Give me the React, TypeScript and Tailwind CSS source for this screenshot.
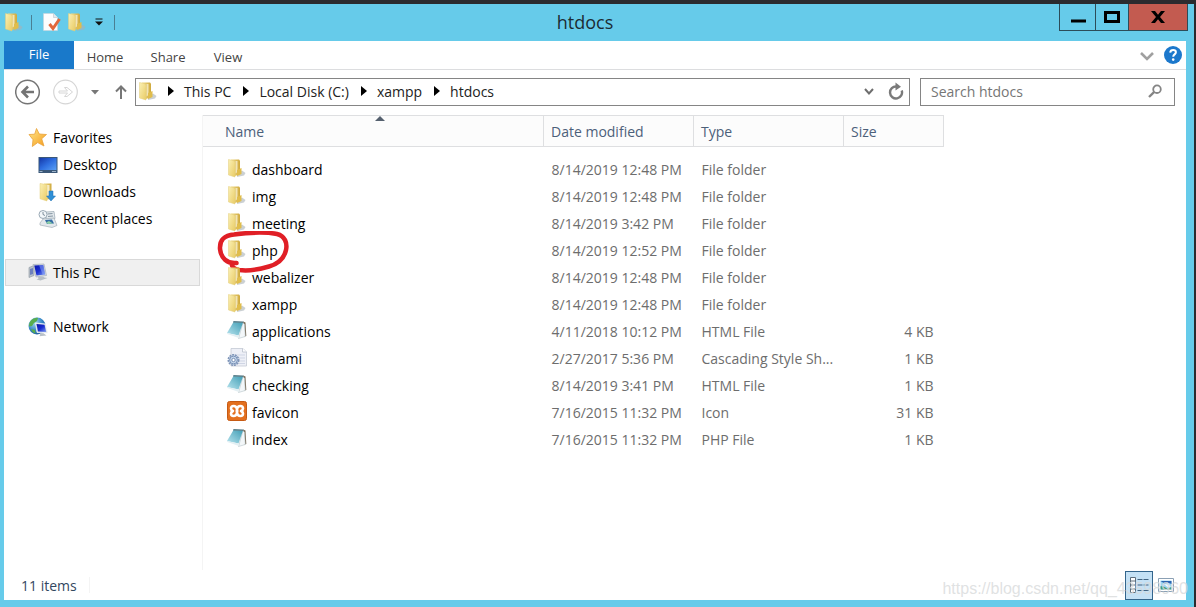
import { useState } from "react";

type FileKind = "folder" | "notepad" | "css" | "xampp";

interface FileRow {
  name: string;
  modified: string;
  type: string;
  size?: string;
  kind: FileKind;
}

const files: FileRow[] = [
  { name: "dashboard", modified: "8/14/2019 12:48 PM", type: "File folder", kind: "folder" },
  { name: "img", modified: "8/14/2019 12:48 PM", type: "File folder", kind: "folder" },
  { name: "meeting", modified: "8/14/2019 3:42 PM", type: "File folder", kind: "folder" },
  { name: "php", modified: "8/14/2019 12:52 PM", type: "File folder", kind: "folder" },
  { name: "webalizer", modified: "8/14/2019 12:48 PM", type: "File folder", kind: "folder" },
  { name: "xampp", modified: "8/14/2019 12:48 PM", type: "File folder", kind: "folder" },
  { name: "applications", modified: "4/11/2018 10:12 PM", type: "HTML File", size: "4 KB", kind: "notepad" },
  { name: "bitnami", modified: "2/27/2017 5:36 PM", type: "Cascading Style Sh...", size: "1 KB", kind: "css" },
  { name: "checking", modified: "8/14/2019 3:41 PM", type: "HTML File", size: "1 KB", kind: "notepad" },
  { name: "favicon", modified: "7/16/2015 11:32 PM", type: "Icon", size: "31 KB", kind: "xampp" },
  { name: "index", modified: "7/16/2015 11:32 PM", type: "PHP File", size: "1 KB", kind: "notepad" },
];

const crumbs = ["This PC", "Local Disk (C:)", "xampp", "htdocs"];

function Gradients() {
  return (
    <svg className="absolute size-0" aria-hidden="true">
      <defs>
        <linearGradient id="folder" x1="0" x2="1" y1="0" y2="1">
          <stop offset="0" stopColor="#fbf0b4" />
          <stop offset="1" stopColor="#e9cc66" />
        </linearGradient>
        <linearGradient id="folderBack" x1="0" x2="1">
          <stop offset="0" stopColor="#f3df90" />
          <stop offset="1" stopColor="#cfa93c" />
        </linearGradient>
        <linearGradient id="screen" x1="0" x2="1" y1="0" y2="1">
          <stop offset="0" stopColor="#1437a8" />
          <stop offset="0.5" stopColor="#2f6fe0" />
          <stop offset="1" stopColor="#5ba1f5" />
        </linearGradient>
        <linearGradient id="monitor" x1="0" x2="1" y1="0" y2="1">
          <stop offset="0" stopColor="#0a14a8" />
          <stop offset="0.5" stopColor="#1a2ed0" />
          <stop offset="1" stopColor="#7d9cf5" />
        </linearGradient>
        <linearGradient id="star" x1="0" x2="1" y1="0" y2="1">
          <stop offset="0" stopColor="#ffe98a" />
          <stop offset="1" stopColor="#f59a1c" />
        </linearGradient>
        <linearGradient id="page" x1="1" x2="0" y1="0" y2="1">
          <stop offset="0" stopColor="#3f9db5" />
          <stop offset="1" stopColor="#b9e4ee" />
        </linearGradient>
        <radialGradient id="globe" cx="0.35" cy="0.3" r="0.8">
          <stop offset="0" stopColor="#a6dcf4" />
          <stop offset="0.6" stopColor="#3283c4" />
          <stop offset="1" stopColor="#174f8c" />
        </radialGradient>
      </defs>
    </svg>
  );
}

function FolderIcon() {
  return (
    <svg viewBox="0 0 20 20" className="size-5 shrink-0" aria-hidden="true">
      <path d="M10 16l5-3.500 3.500 2.500-1.500 2.500-7 1.500z" fill="#a9b0b6" opacity="0.6" />
      <path d="M4 1.500h8l1 1v13.500l-5 2z" fill="url(#folderBack)" />
      <path d="M8.500 3h2v11l-2 1.500z" fill="#fffdf0" opacity="0.6" />
      <path d="M1.500 1.500l4.500 1 2 1v15.500l-6.500-2z" fill="url(#folder)" stroke="#e3cc7a" strokeWidth="0.500" />
      <path d="M10 12l4.500-2v6l-4.500 2z" fill="#e0bd4c" />
    </svg>
  );
}

function NotepadIcon() {
  return (
    <svg viewBox="0 0 20 20" className="size-5 shrink-0" aria-hidden="true">
      <path d="M16 1.500l2.500 1 .8 13.500-3.500 1z" fill="#7a6b55" />
      <path d="M16 2.500l1.500 2 .8 12-6.800 2z" fill="#f3f7f9" stroke="#a9b8bf" strokeWidth="0.500" />
      <path d="M6.500 2L16 2.500 11.500 15.500 0 13z" fill="url(#page)" />
      <path d="M0 13l11.500 2.500.3 2.500L.3 14z" fill="#e3eff3" />
      <path d="M6.500 1l10 .5-.5 1.500-10-.5z" fill="#597f8b" />
    </svg>
  );
}

function CssIcon() {
  return (
    <svg viewBox="0 0 20 20" className="size-5 shrink-0" aria-hidden="true">
      <path d="M4 1.500h12l3.500 3.500v14H4z" fill="#eef0f7" stroke="#c4c9d4" strokeWidth="0.800" />
      <path d="M15.500 1.500V5h4" fill="#fff" stroke="#b9bfcb" strokeWidth="0.800" />
      <path d="M6 8h12M6 11h12M6 14h12M6 16.500h12" stroke="#cfd5e4" strokeWidth="1" />
      <circle cx="6.500" cy="13" r="5.200" fill="#dfe9f5" stroke="#7f95b8" strokeWidth="1.600" strokeDasharray="2 .8" />
      <circle cx="6.500" cy="13" r="3.900" fill="#c7d8ec" stroke="#6f88b0" strokeWidth="0.900" />
      <circle cx="6.500" cy="13" r="1.700" fill="#fff" stroke="#5f7aa5" strokeWidth="0.800" />
    </svg>
  );
}

function XamppIcon() {
  return (
    <svg viewBox="0 0 20 20" className="size-5 shrink-0" aria-hidden="true">
      <rect x="0.500" y="0.500" width="19" height="19" rx="2" fill="#e3701f" stroke="#c65a14" />
      <path
        d="M10 8C9.500 5.500 8 5 6.500 5S4 6 4 7.500s1 2 2 2.500c-1 .5-2 1-2 2.500S5 15 6.500 15s3-.5 3.500-3c.5 2.500 2 3 3.500 3s2.500-1 2.500-2.500-1-2-2-2.500c1-.5 2-1 2-2.500S15 5 13.500 5 10.500 5.500 10 8z"
        fill="none"
        stroke="#fff"
        strokeWidth="2.600"
        strokeLinejoin="round"
      />
      <path d="M8.500 10h3" stroke="#fff" strokeWidth="3" />
    </svg>
  );
}

const fileIcons: Record<FileKind, () => React.JSX.Element> = {
  folder: FolderIcon,
  notepad: NotepadIcon,
  css: CssIcon,
  xampp: XamppIcon,
};

function StarIcon() {
  return (
    <svg viewBox="0 0 20 20" className="size-5 shrink-0" aria-hidden="true">
      <path
        d="M8.500 .5l2.800 5.500 7.200.5-4.800 4.300 2.300 7.200-6.300-3.400L4.300 18.500l.7-6.800L1 6.500l5.700-.3z"
        fill="url(#star)"
        stroke="#e8a23a"
        strokeWidth="0.800"
        strokeLinejoin="round"
      />
    </svg>
  );
}

function DesktopIcon() {
  return (
    <svg viewBox="0 0 20 20" className="size-5 shrink-0" aria-hidden="true">
      <rect x="0.500" y="2" width="19" height="16" fill="#3b5878" />
      <rect x="1.500" y="3" width="17" height="12" fill="url(#screen)" />
      <path d="M1.500 16.500h3M14 16.500h4" stroke="#9cb2c8" />
    </svg>
  );
}

function DownloadsIcon() {
  return (
    <svg viewBox="0 0 20 20" className="size-5 shrink-0" aria-hidden="true">
      <path d="M6 1.500h7.500v15L8 18z" fill="url(#folderBack)" />
      <path d="M8 3h3.500v11L8 16z" fill="#fffdf0" opacity="0.7" />
      <path d="M2 1.500l5 .8 2 1.200v15.500l-7-2.200z" fill="url(#folder)" stroke="#e3cc7a" strokeWidth="0.500" />
      <path d="M11 9h4v5h2.500L13 19l-4.500-5H11z" fill="#2f8fd6" stroke="#1f6fb0" strokeWidth="0.500" />
    </svg>
  );
}

function RecentIcon() {
  return (
    <svg viewBox="0 0 20 20" className="size-5 shrink-0" aria-hidden="true">
      <path d="M8 3l8-.5 1 7-9 1.500z" fill="#e2e8ec" stroke="#98a6b0" strokeWidth="0.700" />
      <path d="M9.500 5l5-.5M10 7.500l5-.5" stroke="#8596a3" />
      <circle cx="5" cy="5.500" r="4" fill="#f3f7fa" stroke="#9aa9b5" />
      <path d="M5 3v2.500l2 1" fill="none" stroke="#5d7180" strokeWidth="0.800" />
      <path d="M2 14l3-4 11-1 3 7.500-5 2-12-2.500z" fill="#e3e8ec" stroke="#97a5af" strokeWidth="0.600" />
      <path d="M7 11l7-.5 2 4-7 .5z" fill="#346da5" />
      <path d="M8 13.500l3-1.500 4 2.500-5 .5z" fill="#8fd0a8" />
    </svg>
  );
}

function PcIcon() {
  return (
    <svg viewBox="0 0 20 20" className="size-5 shrink-0" aria-hidden="true">
      <path d="M1 4.500l5-2v10l-5 2z" fill="#b9c1c9" stroke="#8b969f" strokeWidth="0.600" />
      <path d="M2 6l3-1v6l-3 1z" fill="#6d80bd" />
      <path d="M5 1.500l11-.5 2.500 11.500L8 14z" fill="#d7dde4" stroke="#9aa5b0" strokeWidth="0.600" />
      <path d="M6.200 2.500l9-.5 2 9.500-8.700 1z" fill="url(#monitor)" />
      <path d="M11 2.300l4.200-.3 2 9.500-2.500.2z" fill="#93aefa" opacity="0.5" />
      <path d="M10 14l5-.5 1.500 1 3 .5-7 2.500-4-1 2-1z" fill="#b6bec6" />
    </svg>
  );
}

function NetworkIcon() {
  return (
    <svg viewBox="0 0 20 20" className="size-5 shrink-0" aria-hidden="true">
      <circle cx="9" cy="9" r="8.500" fill="url(#globe)" />
      <path d="M3 3.500c2-2 5-3 7-2.500l-1 3-3 2-2 3-3 .5C1 7 1.500 5 3 3.500zM3 12l4 1 .5 3.500C5 16 3.500 14 3 12z" fill="#58ad4e" />
      <path d="M7.500 6l10 1 2 9-10.500-.5z" fill="#d7dde4" stroke="#f3f6f8" strokeWidth="0.800" />
      <path d="M8.500 7l8 .8 1.700 7.200-8.200-.5z" fill="url(#monitor)" />
      <path d="M12.500 16l3 .2 3 2.300-7 .8z" fill="#b9c1c9" />
    </svg>
  );
}

const favorites = [
  { label: "Desktop", Icon: DesktopIcon },
  { label: "Downloads", Icon: DownloadsIcon },
  { label: "Recent places", Icon: RecentIcon },
];

function TitleBar() {
  return (
    <header className="flex h-[37px] shrink-0 items-start">
      <div className="flex h-9 items-center">
        <FolderIcon />
        <span className="ml-[7px] h-[15px] w-px bg-[#4a7f93]" />
        <button type="button" aria-label="Properties" className="ml-2.5">
          <svg viewBox="0 0 20 20" className="size-5">
            <path d="M1.500 1.500h10l4 4v13h-14z" fill="#fdfdfd" stroke="#c7d3da" strokeWidth="0.600" />
            <path d="M11.500 1.500v4h4" fill="#e3e9ed" stroke="#b8c5cd" strokeWidth="0.600" />
            <path d="M7.500 12l3.500 4.500L17.500 7" fill="none" stroke="#e2683c" strokeWidth="3" />
          </svg>
        </button>
        <button type="button" aria-label="New folder" className="ml-[5px]">
          <FolderIcon />
        </button>
        <button type="button" aria-label="Customize Quick Access Toolbar" className="ml-2">
          <svg viewBox="0 0 8 8" className="size-2">
            <path d="M.5 1h7" stroke="#111" strokeWidth="1" />
            <path d="M0 3.500h8L4 7.500z" fill="#111" />
          </svg>
        </button>
        <span className="ml-[11px] h-[15px] w-px bg-[#4a7f93]" />
      </div>
      <h1 className="flex h-9 flex-1 items-center justify-center pr-1 text-[18px] text-[#1c2b33]">htdocs</h1>
      <div className="flex h-[27px] border-b border-l border-[#2c4c59]">
        <button type="button" aria-label="Minimize" className="flex w-9 items-center justify-center border-r border-[#2c4c59]">
          <svg viewBox="0 0 16 12" className="h-3 w-4">
            <path d="M1 8.500h15v3H1z" />
          </svg>
        </button>
        <button type="button" aria-label="Maximize" className="flex w-[33px] items-center justify-center border-r border-[#2c4c59]">
          <svg viewBox="0 0 16 12" className="h-3 w-4">
            <path d="M1.500 1.500h13v9h-13z" fill="none" stroke="#000" strokeWidth="3" />
          </svg>
        </button>
        <button type="button" aria-label="Close" className="flex w-[59px] items-center justify-center border-r border-[#2c4c59] bg-[#c35b50]">
          <svg viewBox="0 0 14 12" className="h-3 w-3.5">
            <path d="M0 0h4l3 3.700L10 0h4L9 6l5 6h-4L7 8.300 4 12H0l5-6z" />
          </svg>
        </button>
      </div>
    </header>
  );
}

function RibbonTabs() {
  return (
    <nav className="flex h-[29px] shrink-0 items-stretch border-b border-[#dcdddf] text-[13px] text-[#444]">
      <button type="button" className="w-[70px] bg-[#1979ca] text-white">
        File
      </button>
      <button type="button" className="w-[62px] pt-1.5">Home</button>
      <button type="button" className="w-16 pt-1.5">Share</button>
      <button type="button" className="w-14 pt-1.5">View</button>
      <button type="button" aria-label="Expand the Ribbon" className="ml-auto pt-0.5">
        <svg viewBox="0 0 14 10" className="h-2.5 w-3.5">
          <path d="M1 2l6 6 6-6" fill="none" stroke="#a0a0a0" strokeWidth="2.600" />
        </svg>
      </button>
      <button type="button" aria-label="Help" className="mr-1 ml-2.5">
        <svg viewBox="0 0 18 18" className="size-[18px]">
          <circle cx="9" cy="9" r="9" fill="#1c78cc" />
          <path d="M6.200 6.600C6.400 4.800 7.600 4 9.100 4c1.700 0 2.800.9 2.800 2.300 0 2-2.700 2.200-2.700 4.400" fill="none" stroke="#fff" strokeWidth="2" />
          <circle cx="9.200" cy="13.600" r="1.300" fill="#fff" />
        </svg>
      </button>
    </nav>
  );
}

function AddressBar() {
  const [query, setQuery] = useState("");

  return (
    <div className="flex h-[45px] shrink-0 items-start pt-2 pr-[11px] pl-[11px]">
      <div className="flex h-7 items-center">
        <button type="button" aria-label="Back">
          <svg viewBox="0 0 26 26" className="size-[26px]" fill="none" stroke="#747474">
            <circle cx="12.500" cy="13" r="11.800" strokeWidth="1.500" />
            <path d="M19 13H7.500M13 7.500L7.500 13l5.500 5.500" strokeWidth="2.600" />
          </svg>
        </button>
        <button type="button" aria-label="Forward" className="ml-3">
          <svg viewBox="0 0 26 26" className="size-[26px]" fill="none" stroke="#d6d6d6">
            <circle cx="12.500" cy="13" r="11.800" strokeWidth="1.200" />
            <path d="M6 12h8.500l-3-3.500h2.500l5.500 4.500-5.500 4.500h-2.500l3-3.500H6z" />
          </svg>
        </button>
        <button type="button" aria-label="Recent locations" className="ml-3">
          <svg viewBox="0 0 8 5" className="h-[5px] w-2">
            <path d="M0 0h8L4 4.500z" fill="#777" />
          </svg>
        </button>
        <button type="button" aria-label="Up" className="ml-4">
          <svg viewBox="0 0 12 14" className="h-3.5 w-3" fill="none" stroke="#777" strokeWidth="2">
            <path d="M6 14V2M1 6.500l5-5 5 5" />
          </svg>
        </button>
      </div>
      <div className="ml-2 flex h-7 flex-1 items-center border border-[#858585] pb-0.5 pl-0.5">
        <FolderIcon />
        {crumbs.map((crumb) => (
          <div key={crumb} className="flex items-center">
            <svg viewBox="0 0 6 10" className="ml-2.5 h-2.5 w-1.5" aria-hidden="true">
              <path d="M0 0l6 5-6 5z" />
            </svg>
            <a href="#" className="mr-0.5 ml-2.5 text-[14px] text-[#222]">
              {crumb}
            </a>
          </div>
        ))}
        <button type="button" aria-label="Previous locations" className="ml-auto">
          <svg viewBox="0 0 10 8" className="h-2 w-2.5">
            <path d="M1 2l4 4.500L9 2" fill="none" stroke="#6e6e6e" strokeWidth="2" />
          </svg>
        </button>
        <button type="button" aria-label="Refresh" className="mr-[5px] ml-3.5">
          <svg viewBox="0 0 16 18" className="h-[18px] w-4">
            <path d="M13.700 8.500a6 6 0 1 1-5.200-4" fill="none" stroke="#7a7a7a" strokeWidth="2.400" />
            <path d="M7.500 .5l5.500 4.300-5.500 3.700z" fill="#7a7a7a" />
          </svg>
        </button>
      </div>
      <label className="ml-2.5 flex h-7 w-[255px] items-center border border-[#858585] pr-3 pb-0.5 pl-2.5">
        <input
          type="text"
          aria-label="Search htdocs"
          placeholder="Search htdocs"
          value={query}
          onChange={(e) => setQuery(e.target.value)}
          className="min-w-0 flex-1 text-[14px] text-[#222] outline-none placeholder:text-[#767676]"
        />
        <svg viewBox="0 0 14 14" className="size-3.5" fill="none" stroke="#858585" aria-hidden="true">
          <circle cx="9" cy="5.200" r="3.800" strokeWidth="1.800" />
          <path d="M6 8.200L1 13" strokeWidth="2.400" />
        </svg>
      </label>
    </div>
  );
}

function Sidebar() {
  return (
    <aside className="w-[199px] shrink-0 border-r border-[#f4f4f4] pt-[9px] text-[14px] text-black">
      <ul>
        <li className="flex h-[27px] items-center pl-6">
          <StarIcon />
          <a href="#" className="ml-[5px]">Favorites</a>
        </li>
        {favorites.map(({ label, Icon }) => (
          <li key={label} className="flex h-[27px] items-center pl-[34px]">
            <Icon />
            <a href="#" className="ml-[5px]">{label}</a>
          </li>
        ))}
      </ul>
      <div className="mt-[27px] mr-0.5 ml-px flex h-[27px] items-center border border-[#d9d9d9] bg-[#f0f0f0] pl-[22px]">
        <PcIcon />
        <a href="#" className="ml-[5px]">This PC</a>
      </div>
      <div className="mt-[27px] flex h-[27px] items-center pl-6">
        <NetworkIcon />
        <a href="#" className="ml-[5px]">Network</a>
      </div>
    </aside>
  );
}

function FileList() {
  return (
    <main className="flex-1">
      <table className="w-[741px] table-fixed text-left text-[14px] text-[#6d6d6d]">
        <colgroup>
          <col />
          <col className="w-[150px]" />
          <col className="w-[150px]" />
          <col className="w-[100px]" />
        </colgroup>
        <thead className="bg-[#fcfcfc] text-[#4c607a]">
          <tr className="h-[31px] border-y border-[#dedfe1]">
            <th className="relative border-r border-[#dedfe1] pl-[22px] font-normal">
              Name
              <span className="absolute top-0 right-0 left-3.5 flex justify-center">
                <svg viewBox="0 0 10 5" className="h-[5px] w-2.5" aria-hidden="true">
                  <path d="M0 5l5-5 5 5z" fill="#55606e" />
                </svg>
              </span>
            </th>
            <th className="border-r border-[#dedfe1] pl-[7px] font-normal">Date modified</th>
            <th className="border-r border-[#dedfe1] pl-[7px] font-normal">Type</th>
            <th className="border-r border-[#dedfe1] pl-[7px] font-normal">Size</th>
          </tr>
        </thead>
        <tbody className="before:block before:h-[9px] before:content-['']">
          {files.map((file) => {
            const Icon = fileIcons[file.kind];
            return (
              <tr key={file.name} className="h-[27px]">
                <td className="relative pl-6">
                  <div className="flex items-center text-black [&>svg]:mb-1">
                    <Icon />
                    <span className="ml-[5px]">{file.name}</span>
                  </div>
                  {file.name === "php" && (
                    <svg viewBox="0 0 72 42" className="absolute -top-1.5 left-3.5 h-[42px] w-[72px]" aria-hidden="true">
                      <path
                        d="M19.500 32C10 33 4 27 3 18 2.500 9 7 4.500 17 3.500c15-2 32-2.500 43-.5 8 2 10.500 9 9 16-2 9-8 14-17 16.500-10 3-22 4.500-30 3.500-5-1-7-3-7.500-6"
                        fill="none"
                        stroke="#e01f26"
                        strokeWidth="4.500"
                        strokeLinecap="round"
                        strokeLinejoin="round"
                      />
                    </svg>
                  )}
                </td>
                <td className="pl-2 whitespace-nowrap">{file.modified}</td>
                <td className="pl-2 whitespace-nowrap">{file.type}</td>
                <td className="pr-2.5 text-right">{file.size}</td>
              </tr>
            );
          })}
        </tbody>
      </table>
    </main>
  );
}

function StatusBar() {
  return (
    <footer className="flex h-[30px] shrink-0 items-center pr-3 pl-[17px] text-[14px] text-[#33475f]">
      <span>11 items</span>
      <span className="ml-3 h-4 w-px bg-[#f4f4f4]" />
      <button
        type="button"
        aria-label="Details view"
        className="ml-auto flex h-[29px] w-7 items-center justify-center border border-[#33658c] bg-[#c4e1f5]"
      >
        <svg viewBox="0 0 20 16" className="h-4 w-5">
          <path d="M1.500.5h5v15h-5z" fill="#fff" stroke="#5e6e7c" />
          <path d="M2 4h4M2 8h4M2 12h4" stroke="#5e6e7c" strokeWidth="1.200" />
          <path d="M8.500 2.500h5M14.500 2.500h5M8.500 8h5M14.500 8h5M8.500 13.500h5M14.500 13.500h5" stroke="#426583" />
        </svg>
      </button>
      <button type="button" aria-label="Large icons view" className="ml-[5px]">
        <svg viewBox="0 0 16 14" className="h-3.5 w-4">
          <path d="M.5.5h15v13H.5z" fill="#fff" stroke="#8ba0b4" />
          <path d="M2.500 2.500h11v9h-11z" fill="#9fd6f5" />
          <path d="M2.500 3l4 2.500 3-1 4 1.500V3z" fill="#2a63b0" />
          <path d="M2.500 8l3 .5 4 2 4-1.500v2.500h-11z" fill="#3d9a7b" />
          <path d="M6 6l4 .5 3 2-3.500.5z" fill="#f1f8fc" />
        </svg>
      </button>
    </footer>
  );
}

export default function App() {
  return (
    <div className="relative flex min-h-screen flex-col border-t-4 border-r-2 border-[#2b2b2f] bg-[#66cbea] pl-1 font-['Open_Sans','Noto_Sans',sans-serif]">
      <Gradients />
      <div className="flex flex-1 flex-col pr-2 pb-[7px]">
        <div className="-mr-0.5">
          <TitleBar />
        </div>
        <div className="flex flex-1 flex-col bg-white">
          <RibbonTabs />
          <AddressBar />
          <div className="flex flex-1">
            <Sidebar />
            <FileList />
          </div>
          <StatusBar />
        </div>
      </div>
      <p className="pointer-events-none absolute right-1.5 bottom-1.5 font-['Liberation_Sans',sans-serif] text-[16px] text-[#d8dadb]/80">
        https://blog.csdn.net/qq_43598960
      </p>
    </div>
  );
}
